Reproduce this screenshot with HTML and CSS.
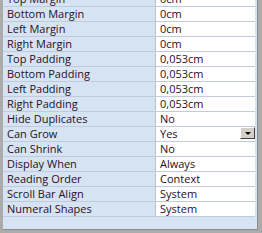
FILE: index.html
```
<!DOCTYPE html>
<html lang="en">
<head>
    <meta charset="UTF-8">
    <title>Property Sheet</title>
    <link rel="stylesheet" href="styles.css">
</head>
<body>
    <div class="frame">
        <div class="sheet">
            <div class="rows">
                <div class="row"><div class="name">Top Margin</div><div class="value">0cm</div></div>
                <div class="row"><div class="name">Bottom Margin</div><div class="value">0cm</div></div>
                <div class="row"><div class="name">Left Margin</div><div class="value">0cm</div></div>
                <div class="row"><div class="name">Right Margin</div><div class="value">0cm</div></div>
                <div class="row"><div class="name">Top Padding</div><div class="value">0,053cm</div></div>
                <div class="row"><div class="name">Bottom Padding</div><div class="value">0,053cm</div></div>
                <div class="row"><div class="name">Left Padding</div><div class="value">0,053cm</div></div>
                <div class="row"><div class="name">Right Padding</div><div class="value">0,053cm</div></div>
                <div class="row"><div class="name">Hide Duplicates</div><div class="value">No</div></div>
                <div class="row"><div class="name">Can Grow</div><div class="value combo"><span>Yes</span><span class="drop"><span class="arrow"></span></span></div></div>
                <div class="row"><div class="name">Can Shrink</div><div class="value">No</div></div>
                <div class="row"><div class="name">Display When</div><div class="value">Always</div></div>
                <div class="row"><div class="name">Reading Order</div><div class="value">Context</div></div>
                <div class="row"><div class="name">Scroll Bar Align</div><div class="value">System</div></div>
                <div class="row"><div class="name">Numeral Shapes</div><div class="value">System</div></div>
            </div>
        </div>
    </div>
</body>
</html>
```
FILE: styles.css
```
body {
    margin: 0;
    font-family: "Open Sans", "Noto Sans", sans-serif;
    font-size: 11px;
    color: #2a0f1c;
}
.frame {
    width: 262px;
    height: 233px;
    box-sizing: border-box;
    background-color: #ababab;
    padding: 0 4px 3px 3px;
}
.sheet {
    height: 100%;
    box-sizing: border-box;
    background-color: #d6e3f3;
    border-right: 1px solid #8c8c8c;
    border-bottom: 1px solid #8c8c8c;
    padding-right: 2px;
    overflow: hidden;
}
.rows {
    margin-top: -8px;
}
.row {
    display: flex;
    height: 14px;
    border-bottom: 1px solid #c2ccd8;
}
.name {
    width: 148px;
    padding-left: 4px;
    border-right: 1px solid #b8c4d3;
    line-height: 14px;
    white-space: nowrap;
}
.value {
    flex: 1;
    background-color: #fff;
    padding-left: 4px;
    line-height: 14px;
}
.combo {
    display: flex;
    justify-content: space-between;
    align-items: flex-start;
}
.drop {
    width: 13px;
    height: 10px;
    background-color: #d4d0c8;
    border: 1px solid;
    border-color: #fff #404040 #404040 #fff;
    display: flex;
    justify-content: center;
    align-items: center;
}
.arrow {
    width: 0;
    height: 0;
    border-left: 3px solid transparent;
    border-right: 3px solid transparent;
    border-top: 3px solid #000;
}
```
